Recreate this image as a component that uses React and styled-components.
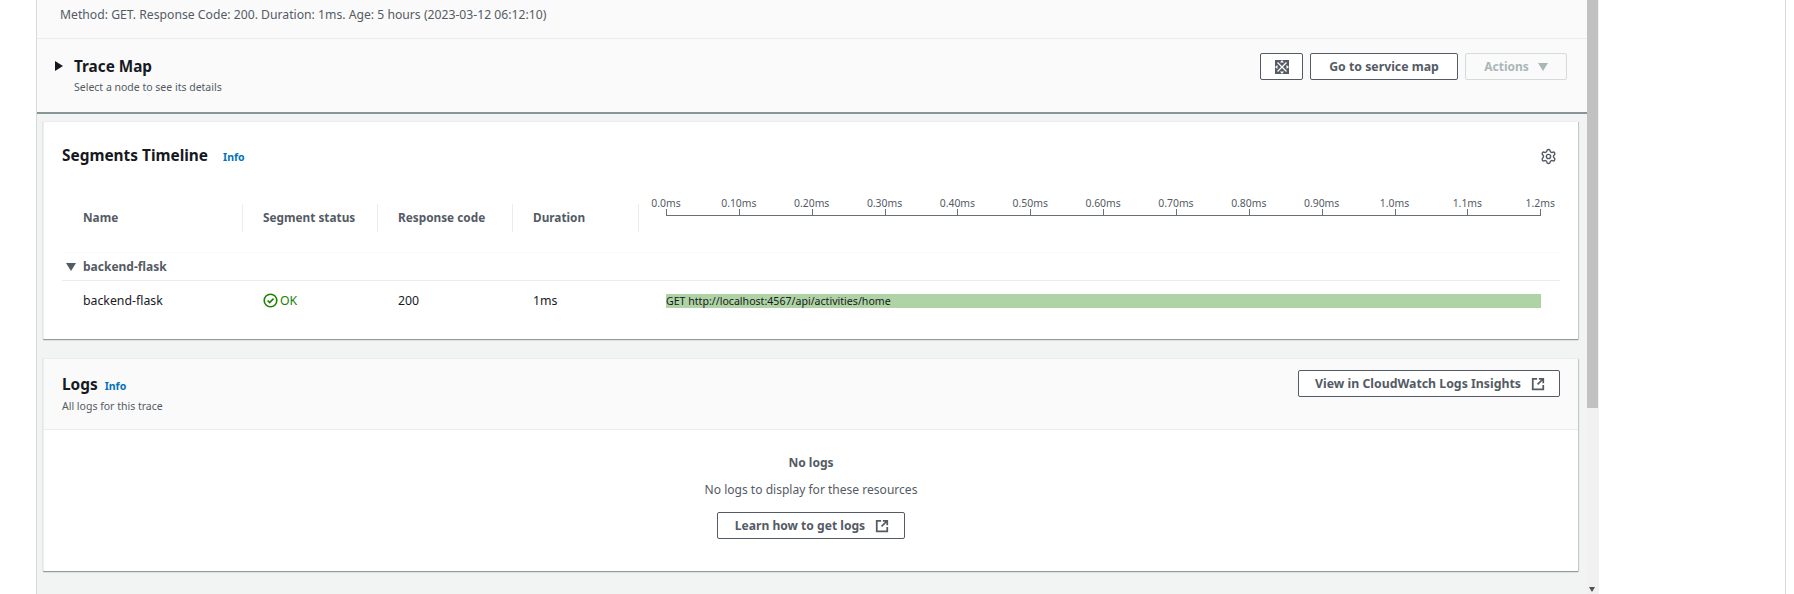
import React from "react";
import styled, { createGlobalStyle } from "styled-components";
import { Settings } from "lucide-react";

const Global = createGlobalStyle`
  html, body { margin: 0; padding: 0; background: #fff; overflow: hidden; }
  * { box-sizing: border-box; }
  body { font-family: "Noto Sans", "Open Sans", sans-serif; color: #16191f; }
`;
const Page = styled.div`
  display: flex; width: 1794px; height: 594px; overflow: hidden; background: #fff;
`;
const Gutter = styled.div`width: 36px; flex: none;`;
const Main = styled.main`
  width: 1551px; flex: none; height: 594px; background: #f2f3f3;
  border-left: 1px solid #d5dbdb; display: flex; flex-direction: column;
`;
const Detail = styled.section`
  background: #fafafa; height: 114px; border-bottom: 2px solid #879596; flex: none;
`;
const MethodLine = styled.div`
  height: 39px; padding: 5px 0 0 23px; font-size: 12.2px; line-height: 20px; color: #545b64;
  border-bottom: 1px solid #eaeded;
`;
const MapHeader = styled.div`
  display: flex; justify-content: space-between; padding: 14px 20px 0 18px;
`;
const MapTitleWrap = styled.div`display: flex; gap: 11px; padding-top: 3px;`;
const Caret = styled.span`
  width: 0; height: 0; flex: none; margin-top: 5px;
  border-left: 8px solid #16191f; border-top: 5px solid transparent; border-bottom: 5px solid transparent;
`;
const MapTitle = styled.h2`margin: 0; font-size: 15.3px; line-height: 20px; font-weight: 700; color: #16191f;`;
const Sub = styled.div`font-size: 10.5px; line-height: 14px; color: #545b64; margin-top: ${p => p.$mt}px;`;
const Actions = styled.div`display: flex; gap: 7px; align-items: flex-start;`;
const Button = styled.button`
  height: 27px; border: 1px solid ${p => (p.disabled ? "#d5dbdb" : "#545b64")}; border-radius: 2px; background: ${p => (p.disabled ? "#fafafa" : "#fff")};
  color: ${p => (p.disabled ? "#aab7b8" : "#545b64")}; font: 700 ${p => p.$fs || 12.3}px/1 "Noto Sans", sans-serif;
  display: inline-flex; align-items: center; justify-content: center; gap: ${p => p.$gap || 8}px; padding: 1px 0 0 ${p => p.$pl || 0}px;
  width: ${p => p.$w}px; flex: none;
`;
const Content = styled.div`
  flex: 1; display: flex; flex-direction: column; gap: 19px; padding: 7px 9px 0 6px;
`;
const Card = styled.section`
  background: #fff; border-top: 1px solid #eaeded; border-left: 1px solid #eaeded;
  box-shadow: 0 1px 1px 0 rgba(0,28,36,.3), 1px 1px 1px 0 rgba(0,28,36,.15); flex: none;
`;
const TimelineCard = styled(Card)`height: 218px; padding: 0 18px 0 18px;`;
const TimelineHead = styled.div`
  display: flex; align-items: center; height: 66px; padding: 2px 3px 0 0; justify-content: space-between;
`;
const HeadLeft = styled.div`display: flex; align-items: baseline; gap: 15px;`;
const CardTitle = styled.h2`margin: 0; font-size: 15.4px; line-height: 20px; font-weight: 700; color: #16191f;`;
const InfoLink = styled.a`font-size: 10.5px; font-weight: 700; color: #0073bb;`;
const ColumnsRow = styled.div`
  display: grid; grid-template-columns: 181px 135px 135px 126px 1fr; height: 65px; border-bottom: 1px solid #fafafa;
`;
const ColHead = styled.div`
  font-size: 11.8px; font-weight: 700; color: #545b64; display: flex; align-items: center; padding: 0 0 2px 20px;
  height: 28px; margin-top: 16px; border-right: 1px solid #eaeded;
`;
const FirstHead = styled(ColHead)`padding-left: 21px;`;
const Axis = styled.div`position: relative; height: 40px;`;
const AxisLabel = styled.span`
  position: absolute; top: 8px; transform: translateX(-50%); font-size: 10.4px; line-height: 14px; color: #545b64; white-space: nowrap;
`;
const AxisLine = styled.div`position: absolute; top: 27px; left: 27px; width: 875px; height: 0; border-top: 1px solid #687078;`;
const Tick = styled.div`position: absolute; top: 21px; width: 1px; height: 7px; background: #687078;`;
const GroupRow = styled.div`
  display: flex; align-items: center; gap: 7px; height: 28px; font-size: 12px; font-weight: 700; color: #545b64; border-bottom: 1px solid #eaeded; padding-left: 4px;
`;
const DownCaret = styled.span`
  width: 0; height: 0; border-top: 8px solid ${p => p.$color || "#545b64"}; border-left: 5px solid transparent; border-right: 5px solid transparent;
`;
const DataRow = styled.div`
  display: grid; grid-template-columns: 181px 135px 135px 126px 1fr; height: 40px; align-items: center; font-size: 12.3px; color: #16191f;
`;
const Cell = styled.div`padding-left: ${p => p.$pl || 20}px; padding-bottom: 2px;`;
const Status = styled(Cell)`display: flex; align-items: center; gap: 2px; color: #1d8102;`;
const BarCell = styled.div`padding-left: 27px;`;
const Bar = styled.div`
  width: 875px; height: 14px; background: #b0d3a6; font-size: 10.6px; line-height: 14px; color: #16191f; white-space: nowrap;
`;
const LogsCard = styled(Card)`height: 213px; display: flex; flex-direction: column;`;
const LogsHead = styled.div`
  height: 71px; flex: none; background: #fafafa; border-bottom: 1px solid #eaeded; display: flex; justify-content: space-between; align-items: flex-start; padding: 11px 18px 0 18px;
`;
const LogsTitleWrap = styled.div`padding-top: 5px;`;
const LogsTitleLine = styled.div`display: flex; align-items: baseline; gap: 7px; height: 24px;`;
const Empty = styled.div`
  flex: 1; display: flex; flex-direction: column; align-items: center; padding-top: 24px; color: #545b64; font-size: 12.05px;
`;
const EmptyTitle = styled.div`font-weight: 700; line-height: 18px;`;
const EmptyText = styled.div`line-height: 18px; margin: 9px 0 13px;`;
const Track = styled.div`
  width: 12px; flex: none; height: 594px; background: #f1f1f1; position: relative;
`;
const Thumb = styled.div`height: 408px; width: 11px; background: #c1c1c1;`;
const TrackArrow = styled.span`
  position: absolute; bottom: 2px; left: 2px; width: 0; height: 0;
  border-top: 5px solid #505050; border-left: 3.5px solid transparent; border-right: 3.5px solid transparent;
`;
const Right = styled.div`flex: 1; border-right: 1px solid #d5dbdb; margin-right: 8px;`;

const External = () => (
  <svg width="14" height="14" viewBox="0 0 16 16" fill="none" stroke="#545b64" strokeWidth="2">
    <path d="M7 2H2v12h12V9" />
    <path d="M9 2h5v5M14 2L7.5 8.5" />
  </svg>
);
const Expand = () => (
  <svg width="14" height="14" viewBox="0 0 14 14">
    <rect width="14" height="14" fill="#545b64" />
    <path d="M2.5 2.5l9 9M11.5 2.5l-9 9" stroke="#fff" strokeWidth="1.3" />
    <path d="M0 7l2.5-2v4zM14 7l-2.5-2v4zM7 0l-2 2.5h4zM7 14l-2-2.5h4z" fill="#fff" />
  </svg>
);
const StatusOk = () => (
  <svg width="15" height="15" viewBox="0 0 15 15" fill="none" stroke="#1d8102" strokeWidth="1.6">
    <circle cx="7.5" cy="7.5" r="6.3" />
    <path d="M4.6 7.5l2.1 2.1 3.8-4" />
  </svg>
);
const labels = ["0.0ms","0.10ms","0.20ms","0.30ms","0.40ms","0.50ms","0.60ms","0.70ms","0.80ms","0.90ms","1.0ms","1.1ms","1.2ms"];

export default function App() {
  return (
    <Page>
      <Global />
      <Gutter />
      <Main>
        <Detail>
          <MethodLine>Method: GET. Response Code: 200. Duration: 1ms. Age: 5 hours (2023-03-12 06:12:10)</MethodLine>
          <MapHeader>
            <MapTitleWrap>
              <Caret />
              <div>
                <MapTitle>Trace Map</MapTitle>
                <Sub $mt={4}>Select a node to see its details</Sub>
              </div>
            </MapTitleWrap>
            <Actions>
              <Button $w={43} aria-label="Expand"><Expand /></Button>
              <Button $w={148}>Go to service map</Button>
              <Button $w={102} $gap={9} $fs={12} disabled>Actions <DownCaret $color="#aab7b8" /></Button>
            </Actions>
          </MapHeader>
        </Detail>
        <Content>
          <TimelineCard>
            <TimelineHead>
              <HeadLeft>
                <CardTitle>Segments Timeline</CardTitle>
                <InfoLink>Info</InfoLink>
              </HeadLeft>
              <Settings size={17} color="#545b64" strokeWidth={2} />
            </TimelineHead>
            <ColumnsRow>
              <FirstHead>Name</FirstHead>
              <ColHead>Segment status</ColHead>
              <ColHead>Response code</ColHead>
              <ColHead>Duration</ColHead>
              <Axis>
                <AxisLine />
                {labels.map((l, i) => (
                  <React.Fragment key={l}>
                    <AxisLabel style={{ left: 27 + i * 72.85 }}>{l}</AxisLabel>
                    <Tick style={{ left: 27 + Math.round(i * 72.85) }} />
                  </React.Fragment>
                ))}
              </Axis>
            </ColumnsRow>
            <GroupRow><DownCaret />backend-flask</GroupRow>
            <DataRow>
              <Cell $pl={21}>backend-flask</Cell>
              <Status><StatusOk /> OK</Status>
              <Cell>200</Cell>
              <Cell>1ms</Cell>
              <BarCell><Bar>GET http://localhost:4567/api/activities/home</Bar></BarCell>
            </DataRow>
          </TimelineCard>
          <LogsCard>
            <LogsHead>
              <LogsTitleWrap>
                <LogsTitleLine>
                  <CardTitle>Logs</CardTitle>
                  <InfoLink>Info</InfoLink>
                </LogsTitleLine>
                <Sub $mt={0}>All logs for this trace</Sub>
              </LogsTitleWrap>
              <Button $w={262} $gap={10} $pl={2}>View in CloudWatch Logs Insights <External /></Button>
            </LogsHead>
            <Empty>
              <EmptyTitle>No logs</EmptyTitle>
              <EmptyText>No logs to display for these resources</EmptyText>
              <Button $w={188} $gap={10} $pl={2} $fs={12.1}>Learn how to get logs <External /></Button>
            </Empty>
          </LogsCard>
        </Content>
      </Main>
      <Track><Thumb /><TrackArrow /></Track>
      <Right />
    </Page>
  );
}
